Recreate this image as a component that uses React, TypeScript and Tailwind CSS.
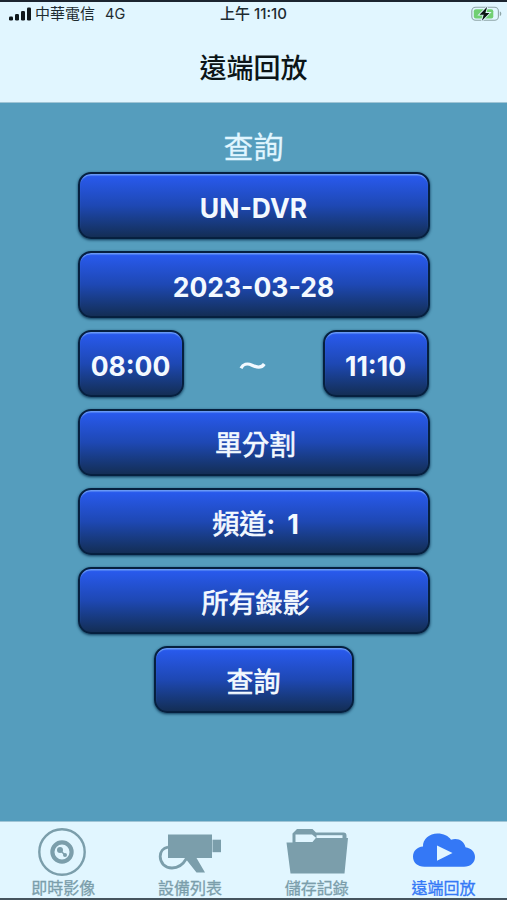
import { ReactNode } from 'react';
import clsx from 'clsx';

interface GlossyButtonProps {
  children: ReactNode;
  className?: string;
}

function GlossyButton({ children, className }: GlossyButtonProps) {
  return (
    <button
      className={clsx(
        'flex h-[67px] items-center justify-center whitespace-nowrap rounded-[13px] border-[2.5px] border-[#06203f] bg-linear-to-b from-[#2a5cf5] via-[#1e48b4] to-[#132c50] bg-origin-border pt-[5px] leading-none text-[#f3f9ff] shadow-[inset_0_2px_1px_-0.5px_#6c9cf5,0_1px_3px_#0b3554]',
        className
      )}
    >
      {children}
    </button>
  );
}

function SignalIcon() {
  return (
    <svg width="22" height="14" viewBox="0 0 22 14" fill="#10181c">
      <rect x="0" y="9.5" width="4" height="4" rx="1.2" />
      <rect x="6" y="7" width="4" height="6.5" rx="1.2" />
      <rect x="12" y="4" width="4" height="9.5" rx="1.2" />
      <rect x="18" y="0.5" width="4" height="13" rx="1.2" />
    </svg>
  );
}

function BatteryIcon() {
  return (
    <svg width="31" height="16" viewBox="0 0 31 16">
      <rect x="0.8" y="1.3" width="26.6" height="13" rx="3.8" fill="none" stroke="#8fa5a8" strokeWidth="1.1" />
      <path d="M28.8 5.6c2 .5 2 4 0 4.5z" fill="#8fa5a8" />
      <rect x="2.8" y="3.2" width="19.5" height="9.2" rx="2" fill="#71cf73" />
      <path d="M16.2.8 8.5 8.7h4.2l-1.8 6.1 7.6-7.9h-4.1z" fill="#0b1512" stroke="#e1f6ff" strokeWidth="1.8" paintOrder="stroke" />
    </svg>
  );
}

function LensIcon() {
  return (
    <svg width="64" height="50" viewBox="0 0 64 50" fill="none" stroke="#7b9eab">
      <circle cx="31" cy="25" r="22.7" strokeWidth="2.4" />
      <circle cx="31" cy="25" r="9.6" strokeWidth="4.2" />
      <circle cx="29" cy="23" r="3" fill="#7b9eab" stroke="none" />
      <circle cx="34" cy="28" r="2" fill="#7b9eab" stroke="none" />
      <path d="m29 23 5 5" strokeWidth="1.5" />
    </svg>
  );
}

function CameraIcon() {
  return (
    <svg width="64" height="50" viewBox="0 0 64 50" fill="#7b9eab">
      <path d="M10 7.5h44v23.5H38.5l8.500 14.500h-8.500L29 33.500l-2.500-2.500H10z" />
      <path d="M54.500 12.700H63v12.500h-8.500z" />
      <path d="M10 20.200C5 21 2.200 25 2.200 29.600 2.200 36 7 41 14 41c6 0 11-3.500 14.500-9.500" fill="none" stroke="#7b9eab" strokeWidth="2.8" />
    </svg>
  );
}

function FolderIcon() {
  return (
    <svg width="64" height="50" viewBox="0 0 64 50" fill="#7b9eab">
      <path d="M7.5 17V6.5L12 2h15.500l3.500 3.500h27.500q3 0 3 3V17z" />
      <path d="M10.500 7.500h16.500l4 3.200-3.500 4.300H10.500z" fill="#e1f6ff" />
      <path d="M31.500 8.200h26v3.200h-26z" fill="#e1f6ff" />
      <path d="M1.500 15.500H28l3.500-4.500H63l-3.500 35.500h-54z" />
    </svg>
  );
}

function CloudPlayIcon() {
  return (
    <svg width="64" height="50" viewBox="0 0 64 50" fill="#3478f6">
      <path d="M12.500 40.500C5.500 40.500 1 36.300 1 30.500c0-5.700 4-9.700 10-10.200C10.500 13 17.500 7.200 25.500 7.200c6 0 11 2.400 13.500 6.200 6.800-2.400 13.300 1.200 14.500 7.600 5.500.8 9.500 4.600 9.500 9.700 0 5.600-4.500 9.800-11 9.800z" transform="translate(0 -.7)" />
      <path d="M25 18.500v15.200L40.500 26.100z" fill="#e1f6ff" />
    </svg>
  );
}

const tabs = [
  { label: '即時影像', icon: <LensIcon /> },
  { label: '設備列表', icon: <CameraIcon /> },
  { label: '儲存記錄', icon: <FolderIcon /> },
  { label: '遠端回放', icon: <CloudPlayIcon />, active: true },
];

const latin = 'text-[26.5px] font-bold';
const cjk = 'text-[27px] pl-1 [-webkit-text-stroke:0.7px]';

export default function App() {
  return (
    <div className="flex h-[900px] w-[507px] flex-col overflow-hidden border-t-2 border-b-2 border-t-[#1c2530] border-b-[#45545e] bg-[#559dbd] font-[Inter,'Noto_Sans_CJK_TC',sans-serif]">
      <header className="h-[101px] shrink-0 border-b border-[#9fc5d6] bg-[#e1f6ff]">
        <div className="grid h-6 grid-cols-3 items-center pr-[5px] pl-[9px] text-[15px] leading-none text-[#1d2b31]">
          <div className="flex items-center whitespace-nowrap">
            <SignalIcon />
            <span className="mb-[2px] ml-1">中華電信</span>
            <span className="ml-[10px] text-[14.5px]">4G</span>
          </div>
          <div className="pr-1 pb-0.5 text-center text-[15px] font-medium whitespace-nowrap">上午 11:10</div>
          <div className="flex justify-end">
            <BatteryIcon />
          </div>
        </div>
        <h1 className="mt-[28px] text-center text-[27px] leading-[30px] font-medium text-[#0c1518]">遠端回放</h1>
      </header>

      <main className="flex flex-1 flex-col items-center pt-[25px]">
        <h2 className="mb-[5px] text-[30px] leading-[39px] text-[#e1f6ff] [-webkit-text-stroke:0.3px]">查詢</h2>
        <div className="flex w-[352px] flex-col gap-3">
          <GlossyButton className={latin}>UN-DVR</GlossyButton>
          <GlossyButton className={latin}>2023-03-28</GlossyButton>
          <div className="flex items-center justify-between">
            <GlossyButton className={clsx('w-[106px]', latin)}>08:00</GlossyButton>
            <svg width="28" height="12" viewBox="0 0 28 12" className="mt-1">
              <path d="M2 8.200C4 4.200 8 2.800 13 5.200c5 2.500 9.500 3 12.300-1.200" fill="none" stroke="#f3f9ff" strokeWidth="3.2" />
            </svg>
            <GlossyButton className={clsx('mr-px w-[106px]', latin)}>11:10</GlossyButton>
          </div>
          <GlossyButton className={cjk}>單分割</GlossyButton>
          <GlossyButton className={cjk}>
            頻道<span className="font-bold [-webkit-text-stroke:0]">:</span>
            <span className="ml-3 font-bold [-webkit-text-stroke:0]">1</span>
          </GlossyButton>
          <GlossyButton className={cjk}>所有錄影</GlossyButton>
          <GlossyButton className="w-[200px] self-center text-[27px] [-webkit-text-stroke:0.7px]">查詢</GlossyButton>
        </div>
      </main>

      <nav className="grid h-[77px] shrink-0 grid-cols-4 border-t border-[#9fc5d6] bg-[#e1f6ff] pt-[5px]">
        {tabs.map((tab) => (
          <a
            key={tab.label}
            className={clsx(
              'flex flex-col items-center gap-px text-[16px] leading-5 [-webkit-text-stroke:0.3px]',
              tab.active ? 'text-[#3478f6]' : 'text-[#7b9eab]'
            )}
          >
            {tab.icon}
            {tab.label}
          </a>
        ))}
      </nav>
    </div>
  );
}
